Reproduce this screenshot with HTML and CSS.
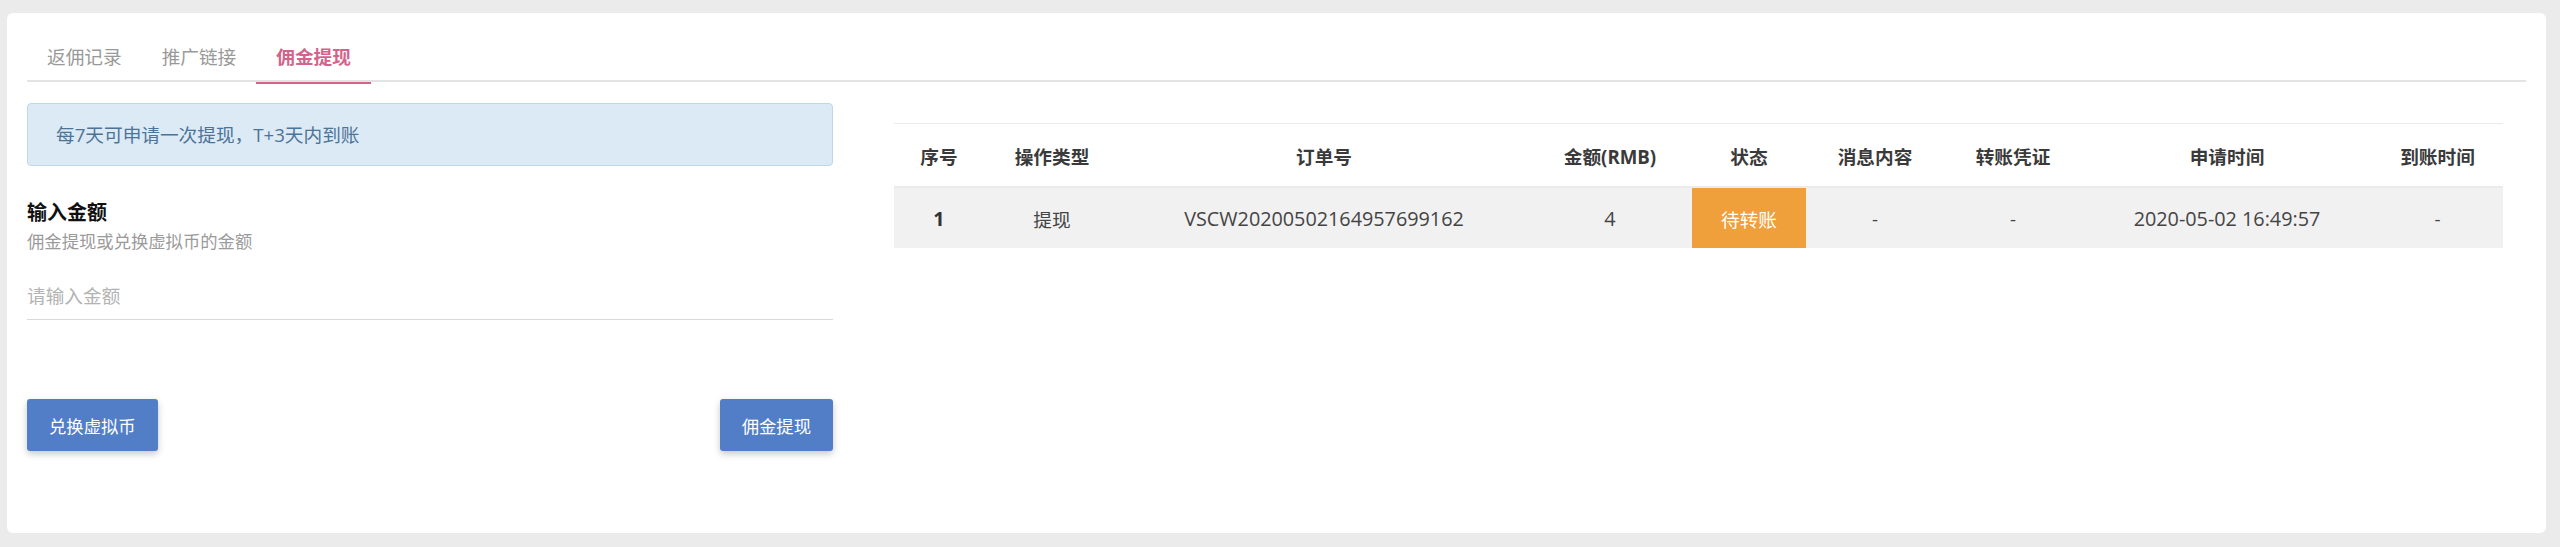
FILE: index.html
```html
<!DOCTYPE html>
<html lang="zh-CN">
<head>
<meta charset="utf-8">
<title>佣金提现</title>
<link rel="stylesheet" href="styles.css">
</head>
<body>
<div class="card">
  <nav class="tabs">
    <a class="tab">返佣记录</a>
    <a class="tab">推广链接</a>
    <a class="tab active">佣金提现</a>
  </nav>
  <div class="content">
    <section class="left">
      <div class="alert">每7天可申请一次提现，T+3天内到账</div>
      <div class="field">
        <div class="label">输入金额</div>
        <div class="hint">佣金提现或兑换虚拟币的金额</div>
        <input class="input" type="text" placeholder="请输入金额">
      </div>
      <div class="actions">
        <button class="btn">兑换虚拟币</button>
        <button class="btn">佣金提现</button>
      </div>
    </section>
    <section class="right">
      <table class="grid">
        <colgroup>
          <col class="c1"><col class="c2"><col class="c3"><col class="c4"><col class="c5"><col class="c6"><col class="c7"><col class="c8"><col class="c9">
        </colgroup>
        <thead>
          <tr>
            <th>序号</th><th>操作类型</th><th>订单号</th><th>金额(RMB)</th><th>状态</th><th>消息内容</th><th>转账凭证</th><th>申请时间</th><th>到账时间</th>
          </tr>
        </thead>
        <tbody>
          <tr>
            <td class="idx num">1</td><td>提现</td><td class="num">VSCW20200502164957699162</td><td class="num">4</td><td class="pending">待转账</td><td>-</td><td>-</td><td class="num">2020-05-02 16:49:57</td><td>-</td>
          </tr>
        </tbody>
      </table>
    </section>
  </div>
</div>
</body>
</html>
```

FILE: styles.css
```css
* { box-sizing: border-box; }
html, body { margin: 0; height: 100%; }
body {
  background: #ebebeb;
  padding: 13px 14px 14px 7px;
  font-family: "Open Sans", "Noto Sans CJK SC", sans-serif;
  font-size: 18.67px;
  color: #444;
}
.card {
  background: #fff;
  border-radius: 6px;
  height: 100%;
  padding: 20px;
}
.tabs {
  display: flex;
  border-bottom: 2px solid #e3e3e3;
  height: 49px;
}
.tab {
  padding: 0 20px;
  line-height: 48px;
  color: #999;
  font-size: 18.67px;
  cursor: pointer;
}
.tab.active {
  color: #d4638b;
  font-weight: 700;
  border-bottom: 2px solid #d4638b;
  height: 51px;
}
.content {
  display: flex;
}
.left {
  width: 806px;
  padding-top: 21px;
}
.alert {
  background: #dceaf6;
  border: 1px solid #bfd7ee;
  border-radius: 4px;
  padding: 19px 28px;
  line-height: 23px;
  color: #4d7397;
  font-size: 18.67px;
}
.field {
  margin-top: 33px;
}
.label {
  font-size: 20px;
  font-weight: 700;
  color: #111;
  line-height: 28px;
}
.hint {
  margin-top: 2px;
  font-size: 17.33px;
  line-height: 24px;
  color: #9b9b9b;
}
.input {
  display: block;
  width: 100%;
  margin-top: 18px;
  height: 49px;
  border: none;
  border-bottom: 1px solid #d9d9d9;
  padding: 0;
  font-family: inherit;
  font-size: 18.67px;
  color: #333;
  outline: none;
  background: transparent;
}
.input::placeholder { color: #b3b3b3; }
.actions {
  margin-top: 79px;
  display: flex;
  justify-content: space-between;
}
.btn {
  height: 52px;
  padding: 0 22px;
  border: none;
  border-radius: 3px;
  background: #517ec6;
  color: #fff;
  font-family: inherit;
  font-size: 17.33px;
  box-shadow: 0 3px 7px rgba(0, 0, 0, 0.22);
  cursor: pointer;
}
.right {
  margin-left: 61px;
  width: 1609px;
  padding-top: 41px;
}
.grid {
  width: 1609px;
  table-layout: fixed;
  border-collapse: separate;
  border-spacing: 0;
  border-top: 1px solid #ebebeb;
}
.c1 { width: 90px; }
.c2 { width: 136px; }
.c3 { width: 408px; }
.c4 { width: 164px; }
.c5 { width: 114px; }
.c6 { width: 138px; }
.c7 { width: 138px; }
.c8 { width: 290px; }
.c9 { width: 131px; }
.grid th {
  height: 62px;
  padding: 0;
  text-align: center;
  font-weight: 700;
  color: #3a3a3a;
  font-size: 18.67px;
}
.grid td {
  height: 62px;
  padding: 0;
  text-align: center;
  background: #f1f1f1;
  border-top: 2px solid #ebebeb;
  color: #444;
  font-size: 18.67px;
}
.grid td.num { font-size: 19.8px; }
.grid td.idx { font-weight: 700; color: #333; }
.grid td.pending {
  background: #f0a03a;
  color: #fff;
}
```
